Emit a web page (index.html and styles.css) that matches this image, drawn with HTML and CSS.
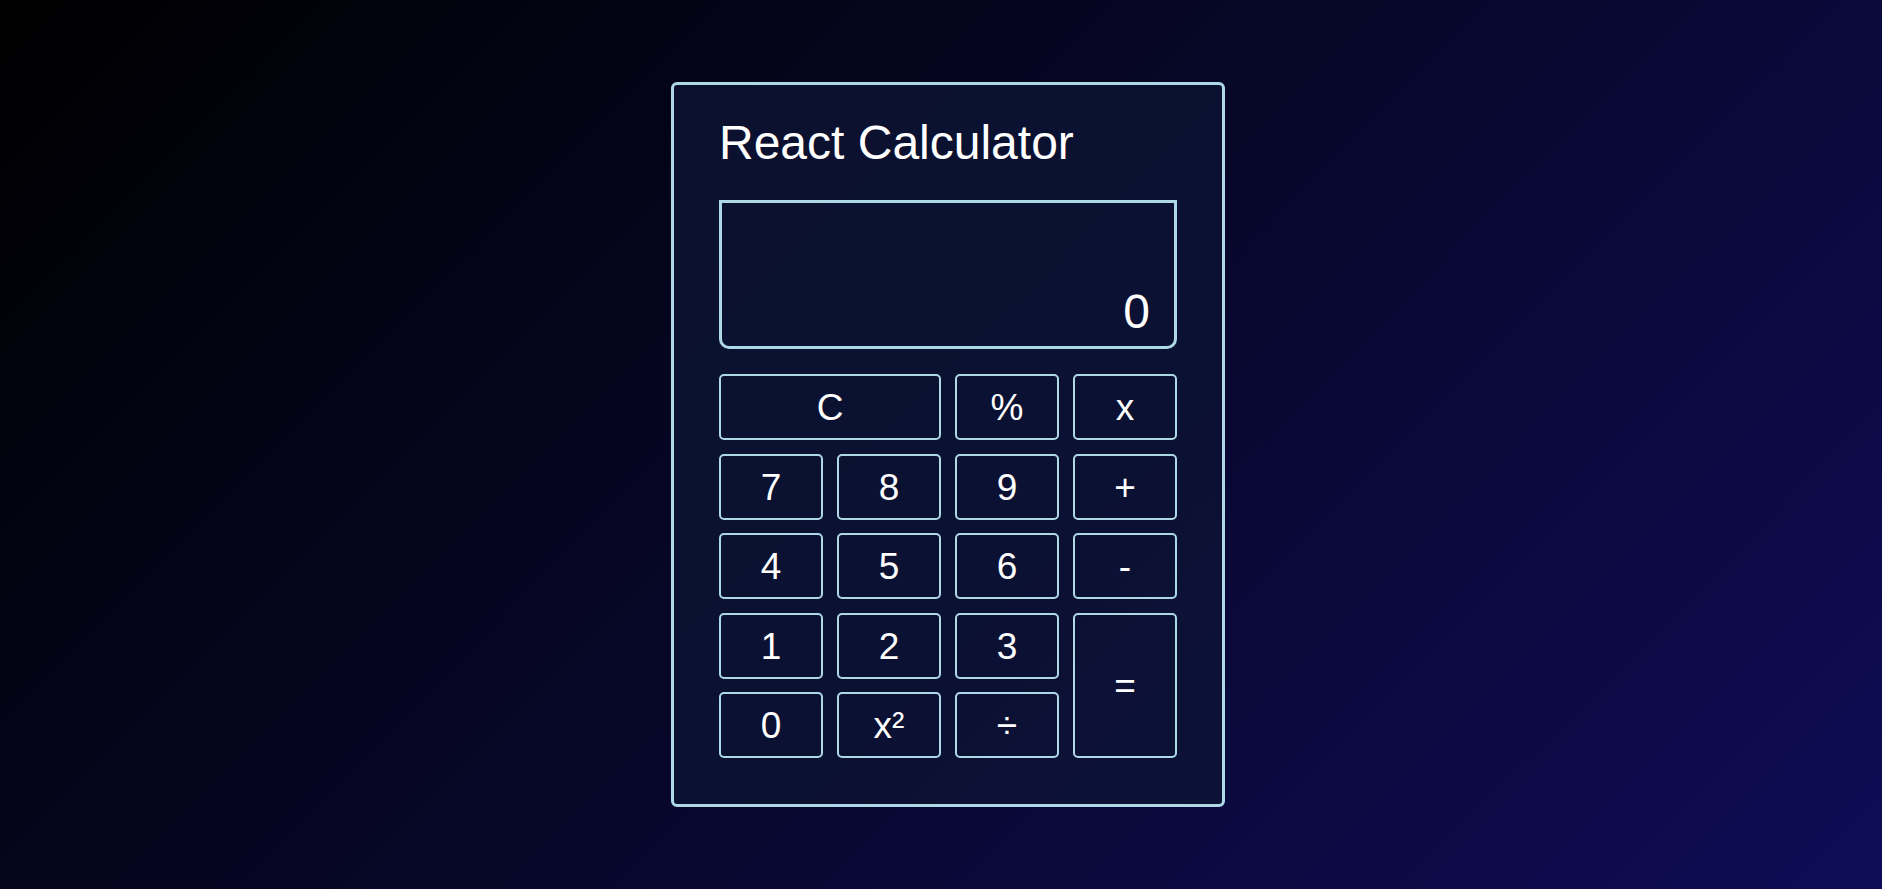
FILE: index.html
```html
<!DOCTYPE html>
<html lang="en">
<head>
<meta charset="utf-8">
<title>React Calculator</title>
<link rel="stylesheet" href="styles.css">
</head>
<body>
<main class="page">
  <div class="calculator">
    <h1 class="title">React Calculator</h1>
    <div class="display"><span class="display-value">0</span></div>
    <div class="keys">
      <button class="key key-wide">C</button>
      <button class="key">%</button>
      <button class="key">x</button>
      <button class="key">7</button>
      <button class="key">8</button>
      <button class="key">9</button>
      <button class="key">+</button>
      <button class="key">4</button>
      <button class="key">5</button>
      <button class="key">6</button>
      <button class="key">-</button>
      <button class="key">1</button>
      <button class="key">2</button>
      <button class="key">3</button>
      <button class="key key-tall">=</button>
      <button class="key">0</button>
      <button class="key">x²</button>
      <button class="key">÷</button>
    </div>
  </div>
</main>
</body>
</html>
```
FILE: styles.css
```css
* {
  box-sizing: border-box;
}

html, body {
  margin: 0;
  height: 100%;
}

body {
  font-family: "Liberation Sans", Arial, sans-serif;
  color: #ffffff;
  background: linear-gradient(135deg, #000000 0%, #07072a 50%, #0f0c56 100%);
}

.page {
  height: 100%;
  display: flex;
  align-items: center;
  justify-content: center;
  padding-left: 14px;
}

.calculator {
  width: 554px;
  padding: 31px 45px 46px;
  border: 3px solid #add8e6;
  border-radius: 6px;
  background: rgba(13, 20, 52, 0.78);
}

.title {
  margin: 0 0 30px;
  font-size: 48px;
  font-weight: 400;
  line-height: 54px;
}

.display {
  height: 149px;
  border: 3px solid #add8e6;
  border-radius: 0 0 10px 10px;
  display: flex;
  align-items: flex-end;
  justify-content: flex-end;
  padding: 0 24px 7px;
  margin-bottom: 25px;
}

.display-value {
  font-size: 48px;
  line-height: 54px;
}

.keys {
  display: grid;
  grid-template-columns: repeat(4, 1fr);
  grid-auto-rows: 66px;
  column-gap: 14px;
  row-gap: 13.5px;
}

.key {
  font-family: "Liberation Sans", Arial, sans-serif;
  font-size: 37px;
  color: #ffffff;
  background: transparent;
  border: 2px solid #add8e6;
  border-radius: 5px;
  padding: 2px 0 0;
  cursor: pointer;
}

.key-wide {
  grid-column: span 2;
}

.key-tall {
  grid-column: 4;
  grid-row: 4 / span 2;
}
```
